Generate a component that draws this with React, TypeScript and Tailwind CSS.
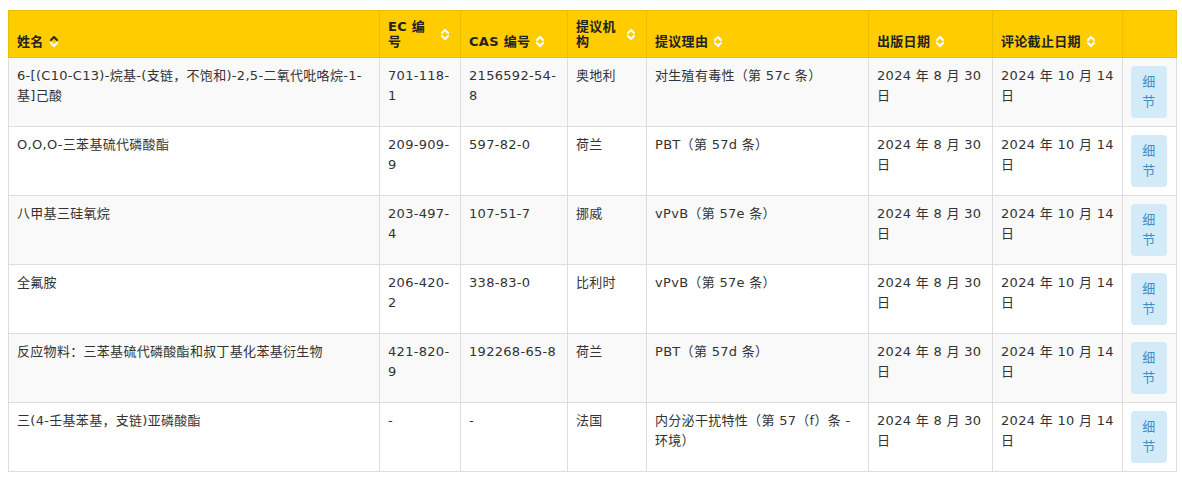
import React from 'react';

type Row = {
  name: string;
  ec: string;
  cas: string;
  agency: string;
  reason: string;
  published: string;
  deadline: string;
};

const rows: Row[] = [
  {
    name: '6-[(C10-C13)-烷基-(支链，不饱和)-2,5-二氧代吡咯烷-1-基]己酸',
    ec: '701-118-1',
    cas: '2156592-54-8',
    agency: '奥地利',
    reason: '对生殖有毒性（第 57c 条）',
    published: '2024 年 8 月 30 日',
    deadline: '2024 年 10 月 14 日',
  },
  {
    name: 'O,O,O-三苯基硫代磷酸酯',
    ec: '209-909-9',
    cas: '597-82-0',
    agency: '荷兰',
    reason: 'PBT（第 57d 条）',
    published: '2024 年 8 月 30 日',
    deadline: '2024 年 10 月 14 日',
  },
  {
    name: '八甲基三硅氧烷',
    ec: '203-497-4',
    cas: '107-51-7',
    agency: '挪威',
    reason: 'vPvB（第 57e 条）',
    published: '2024 年 8 月 30 日',
    deadline: '2024 年 10 月 14 日',
  },
  {
    name: '全氟胺',
    ec: '206-420-2',
    cas: '338-83-0',
    agency: '比利时',
    reason: 'vPvB（第 57e 条）',
    published: '2024 年 8 月 30 日',
    deadline: '2024 年 10 月 14 日',
  },
  {
    name: '反应物料：三苯基硫代磷酸酯和叔丁基化苯基衍生物',
    ec: '421-820-9',
    cas: '192268-65-8',
    agency: '荷兰',
    reason: 'PBT（第 57d 条）',
    published: '2024 年 8 月 30 日',
    deadline: '2024 年 10 月 14 日',
  },
  {
    name: '三(4-壬基苯基，支链)亚磷酸酯',
    ec: '-',
    cas: '-',
    agency: '法国',
    reason: '内分泌干扰特性（第 57（f）条 - 环境）',
    published: '2024 年 8 月 30 日',
    deadline: '2024 年 10 月 14 日',
  },
];

const SortIcon = ({ active }: { active?: boolean }) => (
  <svg width="10" height="13" viewBox="0 0 10 13" className="shrink-0">
    <path d="M2 5 L5 2 L8 5" fill="none" stroke={active ? '#3a3000' : '#ffffff'} strokeWidth="2.2" strokeLinecap="round" strokeLinejoin="round" />
    <path d="M2 8 L5 11 L8 8" fill="none" stroke="#ffffff" strokeWidth="2.2" strokeLinecap="round" strokeLinejoin="round" />
  </svg>
);

const Th = ({ label, width, active, sortable = true }: { label: string; width: string; active?: boolean; sortable?: boolean }) => (
  <th className={`${width} border border-[#e8c000] pl-2 pr-[10px] pt-2 pb-2 align-bottom text-left font-bold`}>
    <div className="flex items-center gap-[5px]">
      <span>{label}</span>
      {sortable && <SortIcon active={active} />}
    </div>
  </th>
);

export default function App() {
  return (
    <div className="bg-white px-2 pt-[10px] pb-2 text-[13px] tracking-[0.3px] text-[#333] font-['DejaVu_Sans','Noto_Sans_CJK_SC',sans-serif]">
      <table className="w-[1168px] table-fixed border-collapse border border-[#dddddd]">
        <thead>
          <tr className="bg-[#ffcc00] leading-[15px] text-[#222]">
            <Th label="姓名" width="w-[371px]" active />
            <Th label="EC 编号" width="w-[81px]" />
            <Th label="CAS 编号" width="w-[107px]" />
            <Th label="提议机构" width="w-[79px]" />
            <Th label="提议理由" width="w-[222px]" />
            <Th label="出版日期" width="w-[124px]" />
            <Th label="评论截止日期" width="w-[130px]" />
            <Th label="" width="w-[54px]" sortable={false} />
          </tr>
        </thead>
        <tbody className="leading-5">
          {rows.map((r, i) => (
            <tr key={i} className={i % 2 === 0 ? 'bg-[#f9f9f9]' : 'bg-white'}>
              <td className="border border-[#dddddd] px-2 pt-2 align-top break-words">{r.name}</td>
              <td className="border border-[#dddddd] px-2 pt-2 align-top break-words">{r.ec}</td>
              <td className="border border-[#dddddd] px-2 pt-2 align-top break-words">{r.cas}</td>
              <td className="border border-[#dddddd] px-2 pt-2 align-top">{r.agency}</td>
              <td className="border border-[#dddddd] px-2 pt-2 align-top">{r.reason}</td>
              <td className="border border-[#dddddd] px-2 pt-2 align-top">{r.published}</td>
              <td className="border border-[#dddddd] px-2 pt-2 align-top">{r.deadline}</td>
              <td className="border border-[#dddddd] px-[8px] pt-[8px] pb-[8px] align-top">
                <button className="flex h-[52px] w-9 flex-col items-center justify-center rounded bg-[#d3ebf9] text-[#3d8fc4] leading-5">
                  <span>细</span>
                  <span>节</span>
                </button>
              </td>
            </tr>
          ))}
        </tbody>
      </table>
    </div>
  );
}
